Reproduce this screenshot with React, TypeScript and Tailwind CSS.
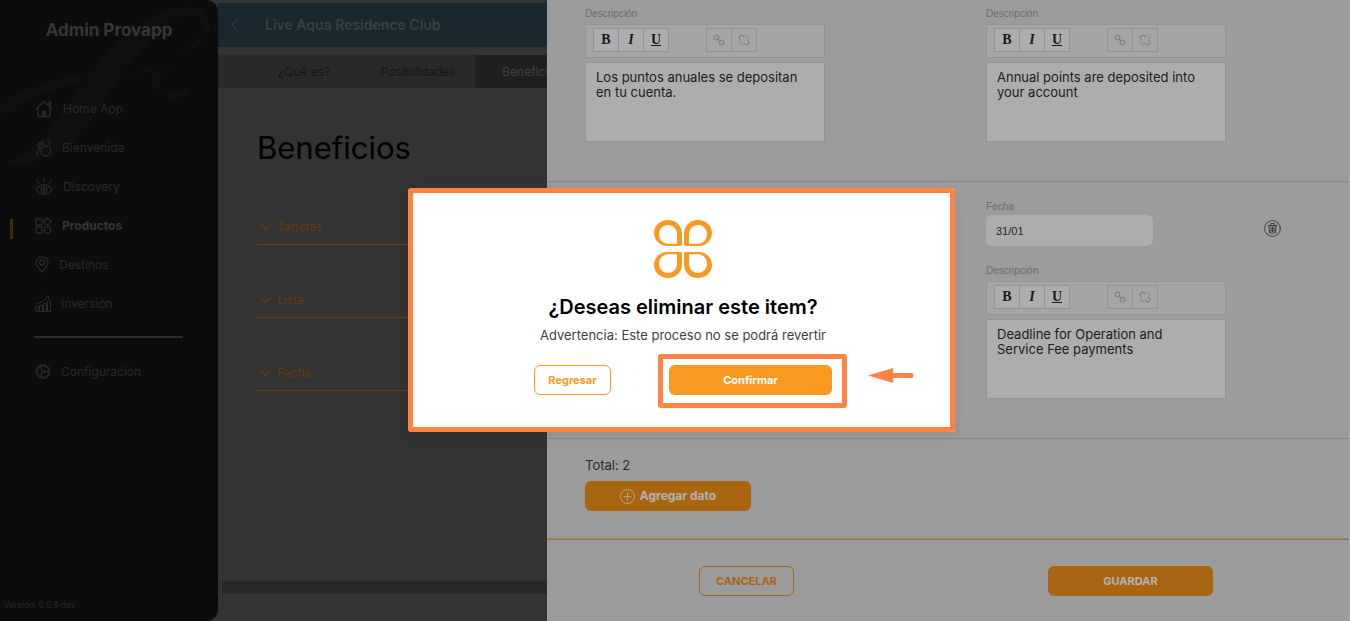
import { useId, useState } from "react"
import type { ReactNode } from "react"

const iconProps = {
  fill: "none",
  stroke: "currentColor",
  strokeWidth: 1.3,
  strokeLinecap: "round",
  strokeLinejoin: "round",
  "aria-hidden": true,
} as const

const HomeIcon = () => (
  <svg width="18" height="18" viewBox="0 0 18 18" {...iconProps}>
    <path d="M1 9 9 1.500 17 9M3 8v8.500h12V8M14 5.500V1.500h1.500v5" />
    <path d="M7.500 16.500v-5h3v5z" fill="currentColor" />
  </svg>
)

const HandIcon = () => (
  <svg width="17" height="18" viewBox="0 0 17 18" {...iconProps} strokeWidth={1.1}>
    <path d="M7.800 9.500 4.700 4.300c-.5-1 .8-1.700 1.400-.8L9.300 8.500 6.500 3.300c-.5-1 .9-1.700 1.400-.8l3.400 5.300c.6.900 1 .5.900-.4-.2-1.300 1.600-1.600 2-.3l1.300 4.200c.7 2.600-.8 4.700-3.200 5.300-2.300.6-4.400-.2-5.700-2.200L3.300 9.300c-.5-1 .7-1.700 1.400-.8L7 11.500M6.500 10.500 3.300 5.800c-.6-1 .7-1.700 1.400-.8" />
    <path d="M12.500 2c1.200.3 2 1.100 2.300 2.300M14.800 1.200l.8.8M1.300 12.300c.5 1.300 1.300 2.100 2.500 2.500M.9 15l1 1" />
  </svg>
)

const EyeIcon = () => (
  <svg width="18" height="18" viewBox="0 0 18 18" {...iconProps}>
    <path d="M1 11.500c2-3 4.700-4.800 8-4.800s6 1.800 8 4.800c-2 3-4.700 4.800-8 4.800S3 14.500 1 11.500zM9 1.200v3M2 2.700l2 2.500M16 2.700l-2 2.500" />
    <circle cx="9" cy="11.500" r="2.900" />
    <circle cx="9" cy="11.500" r=".8" />
  </svg>
)

const ProductsIcon = () => (
  <svg width="17" height="17" viewBox="0 0 17 17" {...iconProps} stroke="#292929">
    <rect x="1" y="2" width="6" height="6" rx="1" />
    <rect x="1" y="10" width="6" height="6" rx="1" />
    <rect x="9.500" y="10" width="6" height="6" rx="1" />
    <path d="m12.300.8 3.900 3.900-3.900 3.900-3.900-3.900z" />
  </svg>
)

const PinIcon = () => (
  <svg width="14" height="17" viewBox="0 0 14 17" {...iconProps}>
    <path d="M7 16C4 13 1 9.800 1 6.800a6 6 0 0 1 12 0C13 9.800 10 13 7 16z" />
    <circle cx="7" cy="6.500" r="2.500" />
  </svg>
)

const InvestIcon = () => (
  <svg width="16" height="17" viewBox="0 0 16 17" {...iconProps} strokeWidth={1}>
    <path d="M.5 16.500v-5h3v5M4.500 16.500v-6h3v6M8.500 16.500V8.500h3v8M12.500 16.500V5.500h3v11zM.5 16.500h15M.5 8.500C6 8 10 5.500 13.500 1.200M11 1h2.700v2.700" />
  </svg>
)

const GearIcon = () => (
  <svg width="16" height="17" viewBox="0 0 16 16" {...iconProps}>
    <circle cx="8" cy="8" r="7.200" strokeWidth={1} strokeDasharray="1.500 1.300" />
    <circle cx="8" cy="8" r="6" />
    <circle cx="8" cy="8" r="1.600" />
    <path d="M9.600 8H14M7.200 6.600 5 2.800M7.200 9.400 5 13.200" />
  </svg>
)

const menuItems = [
  { label: "Home App", icon: HomeIcon },
  { label: "Bienvenida", icon: HandIcon },
  { label: "Discovery", icon: EyeIcon },
  { label: "Productos", icon: ProductsIcon },
  { label: "Destinos", icon: PinIcon },
  { label: "Inversión", icon: InvestIcon },
]

const tabs = ["¿Qué es?", "Posibilidades", "Beneficios"]

const sections = ["Tarjetas", "Lista", "Fecha"]

function Sidebar() {
  return (
    <aside className="relative z-10 flex w-[218px] shrink-0 flex-col overflow-hidden rounded-r-xl bg-[#0c0c0c] text-[#292929]">
      <svg
        className="absolute top-0 left-0"
        width="218"
        height="170"
        viewBox="0 0 218 170"
        fill="#0f0f0f"
        aria-hidden="true"
      >
        <path d="M0 162c26-2 42-22 62-50 22-32 44-62 72-84 22-16 44-24 62-20 14 4 17 18 10 30-7 10-18 16-29 15 13-4 22-13 25-23 3-13-7-18-22-12-22 9-42 34-64 66-20 30-36 56-58 69-18 10-38 12-58 9z" />
        <path d="M0 104c22-15 52-26 87-30l-6 9c-33 6-60 19-81 38z" />
        <path d="M119 81c15-10 32-17 56-17-12 4-17 12-15 20 3 8 15 11 27 4 3-1 4 2 1 6-8 9-26 5-33-5-5-7-4-13-2-17-12 1-23 4-34 9z" />
      </svg>
      <h2 className="relative mt-[17px] text-center text-[17px] leading-[26px] font-bold text-[#363636]">
        Admin Provapp
      </h2>
      <nav className="relative mt-[46px] flex flex-col text-xs">
        {menuItems.map((item) => {
          const Icon = item.icon
          const active = item.label === "Productos"
          return (
            <a
              key={item.label}
              href="#"
              className={`relative flex h-[39px] items-center gap-2.5 pl-[35px] ${
                active ? "font-bold text-[#363636]" : ""
              }`}
            >
              {active && <span className="absolute top-[13px] left-2.5 h-5 w-[3px] bg-[#452703]" />}
              <Icon />
              {item.label}
            </a>
          )
        })}
        <hr className="mt-[13px] mr-[35px] mb-3.5 ml-[34px] border-t-2 border-[#2b2b2b]" />
        <a href="#" className="flex h-[39px] items-center gap-2.5 pl-[35px]">
          <GearIcon />
          Configuración
        </a>
      </nav>
      <p className="mt-auto mb-2 ml-1 font-['Roboto',sans-serif] text-[9px] leading-4">
        Versión: 0.0.9-dev
      </p>
    </aside>
  )
}

function ProductPage() {
  return (
    <main className="flex min-w-0 flex-1 flex-col overflow-hidden pt-[3px]">
      <header className="flex h-11 items-center bg-[#19272e] text-[#383f42]">
        <button aria-label="Volver" className="w-[47px] pl-3">
          <svg width="10" height="12" viewBox="0 0 10 12" {...iconProps} strokeWidth={1}>
            <path d="M7.500.5 2 6l5.500 5.500" />
          </svg>
        </button>
        <p className="text-sm font-semibold">Live Aqua Residence Club</p>
      </header>
      <div className="mt-2 flex h-[33px] bg-[#292929] pl-[29px] text-xs">
        {tabs.map((tab) => (
          <button
            key={tab}
            className={`w-[114px] ${
              tab === "Beneficios" ? "bg-[#1f1f1f] text-[#3f3f3f]" : "text-[#151515]"
            }`}
          >
            {tab}
          </button>
        ))}
      </div>
      <h1 className="mt-10 ml-[39px] text-[31px] leading-10 text-black">Beneficios</h1>
      <div className="mt-1 ml-[39px]">
        {sections.map((section) => (
          <button
            key={section}
            className="flex h-[73px] w-full items-end gap-1.5 border-b border-[#6b3e0b] pb-[9px] pl-[3px] text-xs leading-4 text-[#65390a]"
          >
            <svg width="11" height="16" viewBox="0 0 11 16" {...iconProps}>
              <path d="m.7 5.500 4.800 5 4.800-5" />
            </svg>
            {section}
          </button>
        ))}
      </div>
      <div className="mt-auto mb-[27px] ml-1 h-[13px] bg-[#292929]" />
    </main>
  )
}

function ToolButton({ label, children }: { label: string; children: ReactNode }) {
  return (
    <button
      aria-label={label}
      className="-ml-px flex h-6 w-[26px] items-center justify-center border border-[#949494] bg-[#adadad] font-['Liberation_Serif',serif] text-sm leading-none font-bold text-[#1a1a1a] disabled:bg-transparent disabled:text-[#848484]"
      disabled={label === "Enlace" || label === "Quitar enlace"}
    >
      {children}
    </button>
  )
}

function RichEditor({ text }: { text: string }) {
  const id = useId()
  const [value, setValue] = useState(text)
  return (
    <div className="w-60">
      <label htmlFor={id} className="block font-['Liberation_Sans',sans-serif] text-[10px] leading-4 text-[#6c6c6c]">
        Descripción
      </label>
      <div className="mt-0.5 flex h-[34px] gap-[38px] border border-[#949494] bg-[#a5a5a5] pt-[3px] pl-2">
        <div className="flex">
          <ToolButton label="Negrita">B</ToolButton>
          <ToolButton label="Cursiva">
            <i>I</i>
          </ToolButton>
          <ToolButton label="Subrayado">
            <u>U</u>
          </ToolButton>
        </div>
        <div className="flex">
          <ToolButton label="Enlace">
            <svg width="12" height="12" viewBox="0 0 12 12" {...iconProps}>
              <circle cx="3.500" cy="3.500" r="2.300" />
              <circle cx="8.500" cy="8.500" r="2.300" />
              <path d="m4.500 4.500 3 3" />
            </svg>
          </ToolButton>
          <ToolButton label="Quitar enlace">
            <svg width="12" height="12" viewBox="0 0 12 12" {...iconProps}>
              <path d="M2 5.500C0 3 3 0 5.200 1.800L6 2.800M6 9.200l1 1c2.300 1.800 5-1 3.300-3.200l-1-1" />
              <path d="M1 8h2M1.500 10.500 3 9.200M4.500 9.500v2M7.500.5v1.700M9 3l1.500-1.500M9.700 4.200h1.800" strokeWidth={0.7} />
            </svg>
          </ToolButton>
        </div>
      </div>
      <textarea
        id={id}
        value={value}
        onChange={(e) => setValue(e.target.value)}
        className="mt-1 block h-20 w-full resize-none border border-[#949494] bg-[#adadad] py-[7px] pr-4 pl-2.5 text-[13px] leading-[15px] text-[#1c1c1c] outline-none"
      />
    </div>
  )
}

function EditDrawer() {
  const [date, setDate] = useState("31/01")
  return (
    <section className="absolute inset-y-0 right-0 left-[547px] z-20 flex flex-col border-r border-[#a8a8a8] bg-[#9c9c9c]">
      <div className="grid grid-cols-2 border-b border-[#868686] pt-1.5 pb-[39px]">
        <div className="pl-[38px]">
          <RichEditor text="Los puntos anuales se depositan en tu cuenta." />
        </div>
        <div className="pl-[38px]">
          <RichEditor text="Annual points are deposited into your account" />
        </div>
      </div>

      <div className="grid grid-cols-2 border-b border-[#868686] pt-[17px] pb-[39px]">
        <div className="col-start-2 flex items-start pl-[38px]">
          <div className="w-60">
            <label htmlFor="fecha" className="block font-['Liberation_Sans',sans-serif] text-[10px] leading-4 text-[#6c6c6c]">
              Fecha
            </label>
            <input
              id="fecha"
              value={date}
              onChange={(e) => setDate(e.target.value)}
              className="mb-[17px] block h-[31px] w-[167px] rounded-md bg-[#adadad] px-2.5 font-['Liberation_Sans',sans-serif] text-[11px] text-[#262626] outline-none"
            />
            <RichEditor text="Deadline for Operation and Service Fee payments" />
          </div>
          <button aria-label="Eliminar" className="mt-[21px] ml-[38px] text-[#3c3f42]">
            <svg width="17" height="17" viewBox="0 0 17 17" {...iconProps} strokeWidth={1}>
              <circle cx="8.500" cy="8.500" r="7.900" />
              <path d="M4 5.500h9M6.800 5.500v-2h3.400v2M5 5.500l.4 7.500h6.200l.4-7.500M7 7v4.500M8.500 7v4.500M10 7v4.500" />
            </svg>
          </button>
        </div>
      </div>

      <div className="border-b border-[#868686] pt-4 pb-[27px] pl-[38px]">
        <p className="text-[13px] leading-5 text-[#2a2a2a]">Total: 2</p>
        <button className="mt-1.5 flex h-[30px] w-[166px] items-center justify-center gap-[5px] rounded-md bg-[#a96612] text-xs font-bold text-[#b3b3b3]">
          <svg width="15" height="15" viewBox="0 0 15 15" {...iconProps} strokeWidth={0.8}>
            <circle cx="7.500" cy="7.500" r="7" />
            <path d="M7.500 4v7M4 7.500h7" />
          </svg>
          Agregar dato
        </button>
      </div>

      <footer className="flex justify-between border-t border-[#a9761f] pt-[26px] pr-[136px] pl-[152px] text-[11px] font-bold">
        <button className="h-[30px] w-[95px] rounded-md border border-[#a96612] text-[#a96612]">
          CANCELAR
        </button>
        <button className="h-[30px] w-[165px] rounded-md bg-[#a96612] text-[#b3b3b3]">GUARDAR</button>
      </footer>
    </section>
  )
}

function ConfirmDialog() {
  return (
    <div className="absolute inset-0 z-30 flex items-center justify-center pb-px pl-4">
      <div
        role="dialog"
        aria-labelledby="confirm-title"
        className="relative flex w-[544px] flex-col items-center rounded-[3px] bg-white pt-8 pb-[37px] shadow-[0_4px_16px_rgba(0,0,0,0.08)]"
      >
        <span className="pointer-events-none absolute inset-y-0 right-0 -left-[3px] rounded-[3px] border-5 border-[#ff8345]" />
        <svg width="58" height="58" viewBox="0 0 58 58" fill="#f9991f" fillRule="evenodd" aria-hidden="true">
          <defs>
            <path
              id="petal"
              d="M14 0C6 0 0 6 0 13s6 13 13 13h13q2 0 2-2V14C28 6 22 0 14 0zM14 5c-5 0-9 4-9 9.200S9 23.700 14 23.700h9V14c0-5-4-9-9-9z"
            />
          </defs>
          <use href="#petal" />
          <use href="#petal" transform="matrix(-1 0 0 1 58 0)" />
          <use href="#petal" transform="matrix(1 0 0 -1 0 58)" />
          <use href="#petal" transform="matrix(-1 0 0 -1 58 58)" />
        </svg>
        <h3 id="confirm-title" className="mt-[17px] text-xl leading-6 font-semibold text-black">
          ¿Deseas eliminar este item?
        </h3>
        <p className="mt-1.5 text-[13px] leading-5 text-[#3f3f3f]">
          Advertencia: Este proceso no se podrá revertir
        </p>
        <div className="mt-5 flex gap-[58px] text-[11px] font-bold">
          <button className="h-[30px] w-[77px] rounded-md border border-[#f9991f] text-[#f9991f]">
            Regresar
          </button>
          <div className="relative">
            <button className="h-[30px] w-[163px] rounded-md bg-[#f9991f] text-white">Confirmar</button>
            <span className="pointer-events-none absolute -top-[11px] -right-[15px] -bottom-[13px] -left-[11px] rounded-[3px] border-5 border-[#ff8345]" />
            <svg
              className="absolute top-[3px] left-[199px]"
              width="46"
              height="16"
              viewBox="0 0 46 16"
              fill="#ff8345"
              aria-hidden="true"
            >
              <path d="M0 7.500 25 0v5h18a2.500 2.500 0 0 1 0 5H25v5z" />
            </svg>
          </div>
        </div>
      </div>
    </div>
  )
}

export default function App() {
  return (
    <div className="relative flex min-h-screen overflow-hidden bg-[#333333] font-['Inter',sans-serif]">
      <Sidebar />
      <ProductPage />
      <EditDrawer />
      <ConfirmDialog />
    </div>
  )
}
